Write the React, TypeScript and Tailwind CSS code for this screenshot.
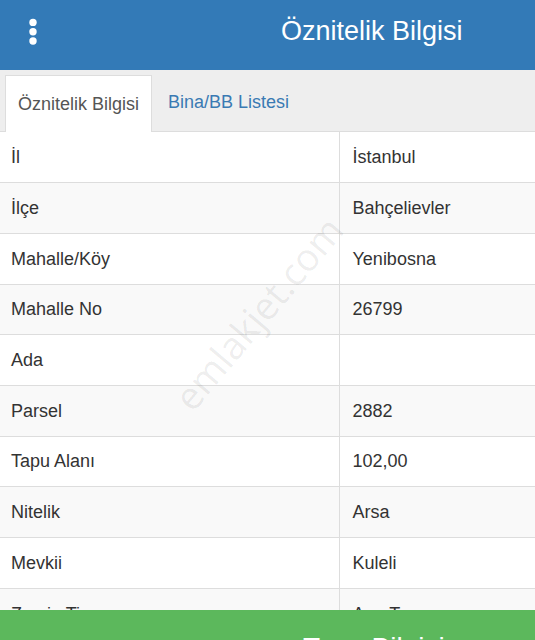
import React from "react";

const rows: [string, string][] = [
  ["İl", "İstanbul"],
  ["İlçe", "Bahçelievler"],
  ["Mahalle/Köy", "Yenibosna"],
  ["Mahalle No", "26799"],
  ["Ada", ""],
  ["Parsel", "2882"],
  ["Tapu Alanı", "102,00"],
  ["Nitelik", "Arsa"],
  ["Mevkii", "Kuleli"],
  ["Zemin Tip", "Ana Taşınmaz"],
];

function KebabIcon() {
  return (
    <svg width="10" height="28" viewBox="0 0 10 28" fill="white">
      <circle cx="5" cy="4.4" r="3.7" />
      <circle cx="5" cy="13.7" r="3.7" />
      <circle cx="5" cy="23" r="3.7" />
    </svg>
  );
}

export default function App() {
  return (
    <div className="relative h-[640px] w-[535px] overflow-hidden bg-white font-['Liberation_Sans',Arial,sans-serif] text-[#333]">
      {/* Top bar */}
      <header className="flex h-[70px] items-center bg-[#337ab7]">
        <button type="button" className="ml-[28px] mb-[7px] flex items-center" aria-label="Menu">
          <KebabIcon />
        </button>
        <h1 className="ml-[243px] mb-[7px] text-[27px] leading-[31px] text-white">Öznitelik Bilgisi</h1>
      </header>

      {/* Tabs */}
      <nav className="flex h-[62px] items-end border-b border-[#ddd] bg-[#eee] pl-[5px]">
        <div className="-mb-px flex h-[57px] items-center border border-b-0 border-[#ddd] bg-white px-[12px] text-[18px] text-[#555]">
          Öznitelik Bilgisi
        </div>
        <div className="ml-[4px] flex h-[57px] items-center px-[12px] text-[18px] text-[#3a7ab3]">
          Bina/BB Listesi
        </div>
      </nav>

      {/* Attribute table */}
      <table className="w-full border-collapse text-[18px]">
        <tbody>
          {rows.map(([label, value], i) => (
            <tr key={label} className={i % 2 === 1 ? "bg-[#f9f9f9]" : "bg-white"}>
              <td className="h-[50.7px] w-[339px] border-b border-r border-[#ddd] px-[11px] leading-[20px]">
                {label}
              </td>
              <td className="h-[50.7px] border-b border-[#ddd] pl-[13px] leading-[20px]">{value}</td>
            </tr>
          ))}
        </tbody>
      </table>

      {/* Watermark */}
      <div className="pointer-events-none absolute left-[258px] top-[313px] -translate-x-1/2 -translate-y-1/2 -rotate-[50deg] whitespace-nowrap font-['Open_Sans',sans-serif] text-[38px] text-black/[0.08]">
        emlakjet.com
      </div>

      {/* Footer action */}
      <div className="absolute left-0 right-0 top-[610px] h-[50px] bg-[#5cb85c] pl-[303px] pt-[24px] text-[28px] leading-[28px] text-white">
        Tapu Bilgisi
      </div>
    </div>
  );
}
